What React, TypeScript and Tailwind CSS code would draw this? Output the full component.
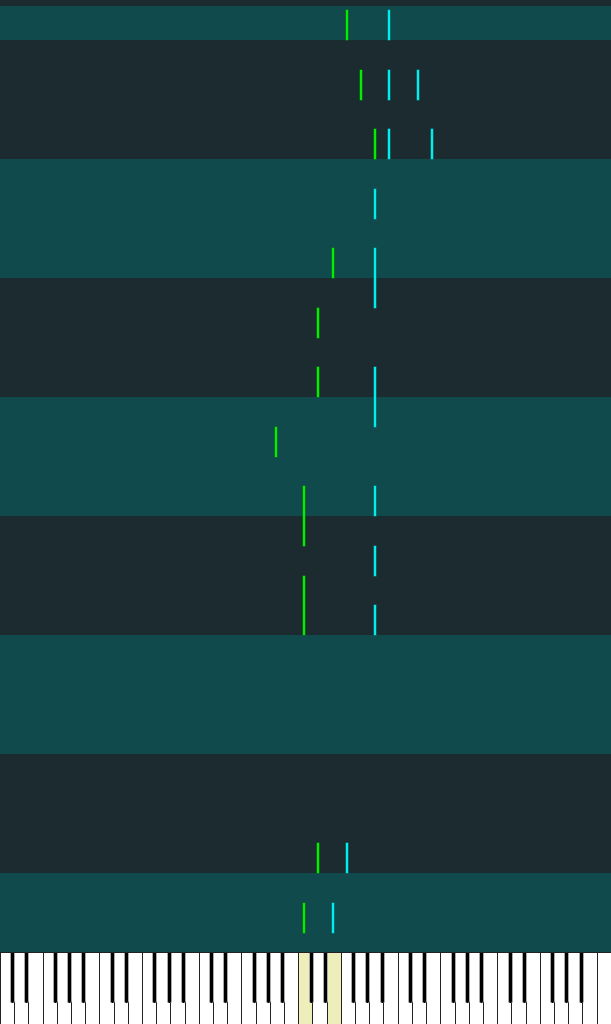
const KEY_W = 611 / 43;
const ROW_H = 29.75;

type Note = { row: number; len: number; key: number; color: "green" | "cyan" };

// white-key index, row counted from the top of the roll
const notes: Note[] = [
  { row: 0, len: 1, key: 24, color: "green" },
  { row: 0, len: 1, key: 27, color: "cyan" },
  { row: 2, len: 1, key: 25, color: "green" },
  { row: 2, len: 1, key: 27, color: "cyan" },
  { row: 2, len: 1, key: 29, color: "cyan" },
  { row: 4, len: 1, key: 26, color: "green" },
  { row: 4, len: 1, key: 27, color: "cyan" },
  { row: 4, len: 1, key: 30, color: "cyan" },
  { row: 6, len: 1, key: 26, color: "cyan" },
  { row: 8, len: 1, key: 23, color: "green" },
  { row: 8, len: 2, key: 26, color: "cyan" },
  { row: 10, len: 1, key: 22, color: "green" },
  { row: 12, len: 1, key: 22, color: "green" },
  { row: 12, len: 2, key: 26, color: "cyan" },
  { row: 14, len: 1, key: 19, color: "green" },
  { row: 16, len: 2, key: 21, color: "green" },
  { row: 16, len: 1, key: 26, color: "cyan" },
  { row: 18, len: 1, key: 26, color: "cyan" },
  { row: 19, len: 2, key: 21, color: "green" },
  { row: 20, len: 1, key: 26, color: "cyan" },
  { row: 28, len: 1, key: 22, color: "green" },
  { row: 28, len: 1, key: 24, color: "cyan" },
  { row: 30, len: 1, key: 21, color: "green" },
  { row: 30, len: 1, key: 23, color: "cyan" },
];

const active = [21, 23];
// black keys sit after these positions in the octave (C, D, F, G, A)
const blackAfter = [0, 1, 3, 4, 5];

const Band = ({ teal, h }: { teal: boolean; h: string }) => (
  <div className={`${h} ${teal ? "bg-[#114a4c]" : "bg-[#1b2b30]"}`} />
);

const Keyboard = () => {
  const whites = Array.from({ length: 43 }, (_, i) => i);
  const blacks = whites.filter((i) => i < 42 && blackAfter.includes(i % 7));
  return (
    <div className="relative flex h-[72px] border-t border-[#222] bg-white">
      {whites.map((i) => (
        <div
          key={i}
          className={`flex-1 border-l border-[#222] ${active.includes(i) ? "bg-[#eeeebb]" : "bg-white"}`}
        />
      ))}
      {blacks.map((i) => (
        <div
          key={i}
          className="absolute top-0 h-[50px] w-[5px] rounded-b-[2px] border-x border-[#aaa] bg-black"
          style={{ left: (i + 1) * KEY_W - 4 }}
        />
      ))}
    </div>
  );
};

export default function App() {
  return (
    <div className="flex h-[1024px] w-[611px] flex-col overflow-hidden bg-[#1b2b30]">
      <div className="h-[6px] bg-[#1b2b30]" />
      <div className="relative flex h-[946px] flex-col">
        <Band teal h="h-[34px]" />
        <Band teal={false} h="h-[119px]" />
        <Band teal h="h-[119px]" />
        <Band teal={false} h="h-[119px]" />
        <Band teal h="h-[119px]" />
        <Band teal={false} h="h-[119px]" />
        <Band teal h="h-[119px]" />
        <Band teal={false} h="h-[119px]" />
        <Band teal h="h-[79px]" />
        {notes.map((n, idx) => (
          <div
            key={idx}
            className={`absolute w-[2px] ${n.color === "green" ? "bg-[#00ee00] shadow-[0_0_0_0.5px_#0a8a0a]" : "bg-[#00eeee] shadow-[0_0_0_0.5px_#0a8a8a]"}`}
            style={{
              left: n.key * KEY_W + 4.7,
              top: 4.25 + n.row * ROW_H,
              height: n.len * ROW_H,
            }}
          />
        ))}
      </div>
      <Keyboard />
    </div>
  );
}
